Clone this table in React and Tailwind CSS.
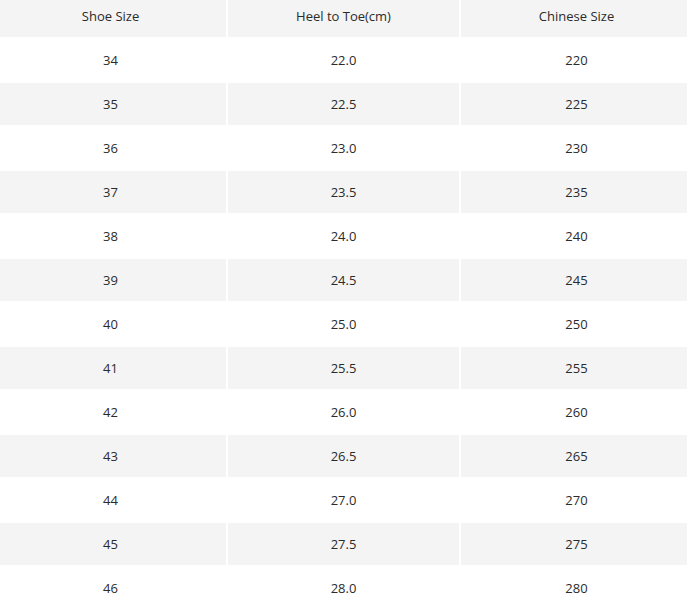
const rows = [
  ["34", "22.0", "220"],
  ["35", "22.5", "225"],
  ["36", "23.0", "230"],
  ["37", "23.5", "235"],
  ["38", "24.0", "240"],
  ["39", "24.5", "245"],
  ["40", "25.0", "250"],
  ["41", "25.5", "255"],
  ["42", "26.0", "260"],
  ["43", "26.5", "265"],
  ["44", "27.0", "270"],
  ["45", "27.5", "275"],
  ["46", "28.0", "280"],
];

const App = () => {
  return (
    <div className="w-[687px] h-[603px] overflow-hidden bg-white font-['Open_Sans',sans-serif] text-[13px] text-[#2b2b2b]">
      <div className="ml-[-5px] w-[697px] grid grid-cols-3 gap-[2px]">
        {["Shoe Size", "Heel to Toe(cm)", "Chinese Size"].map((h) => (
          <div key={h} className="h-[37px] bg-[#f4f4f4] flex items-center justify-center pb-[3px]">
            {h}
          </div>
        ))}
        {rows.map((row, i) =>
          row.map((cell, j) => (
            <div
              key={`${i}-${j}`}
              className={`h-[42px] flex items-center justify-center pt-[2px] ${
                i % 2 === 1 ? "bg-[#f4f4f4]" : "bg-white"
              }`}
            >
              {cell}
            </div>
          ))
        )}
      </div>
    </div>
  );
};

export default App;
